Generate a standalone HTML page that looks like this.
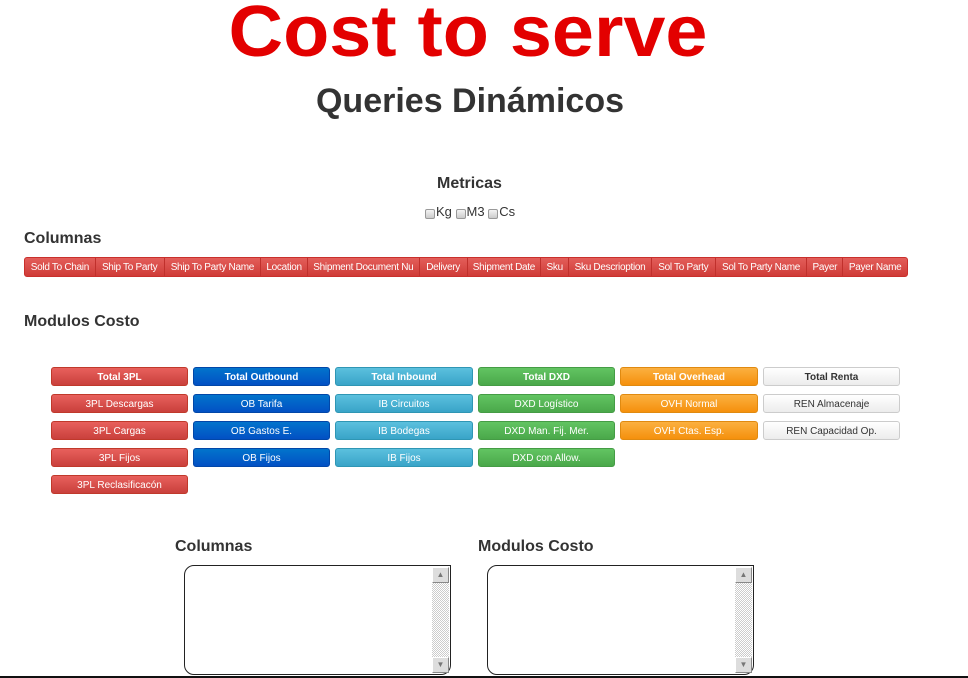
<!DOCTYPE html>
<html><head><meta charset="utf-8"><style>
*{box-sizing:border-box;margin:0;padding:0}
body{width:968px;height:678px;overflow:hidden;background:#fff;font-family:"Liberation Sans",Arial,sans-serif;color:#333;position:relative}
.a{position:absolute}
.t1{left:0;width:936px;text-align:center;top:-4px;font-size:72px;line-height:72px;font-weight:bold;color:#e30000;white-space:nowrap;transform:scaleX(1.05)}
.t2{left:0;width:940px;text-align:center;top:82px;font-size:34px;font-weight:bold;color:#333}
h3{position:absolute;font-size:16px;font-weight:bold;color:#333}
.bar{position:absolute;left:24px;top:257px;width:884px;height:20px;border:1px solid #c9302c;border-radius:3px;background:linear-gradient(#e35e5a,#cf3b37);display:flex;overflow:hidden}
.bar div{height:18px;line-height:19px;color:#fff;font-size:10px;text-align:center;border-left:1px solid #c0302c;white-space:nowrap;letter-spacing:-0.3px}
.bar div:first-child{border-left:none}
.b{position:absolute;width:137px;height:19px;border-radius:3px;font-size:10px;text-align:center;line-height:19px;color:#fff;border:1px solid}
.r{background:linear-gradient(#e8605c,#c9403c);border-color:#c0392b}
.bl{background:linear-gradient(#0274cc,#0250c4);border-color:#0247a8}
.c{background:linear-gradient(#5bc0de,#39a4c8);border-color:#2f96b4}
.g{background:linear-gradient(#62c462,#4aa84a);border-color:#459c45}
.o{background:linear-gradient(#fbb040,#f5900c);border-color:#e08a10}
.w{background:linear-gradient(#fff,#ececec);border-color:#ccc;color:#333}
.bold{font-weight:bold}
.ta{position:absolute;top:565px;width:267px;height:110px;border:1px solid #222;border-radius:10px 0 10px 10px;background:#fff}
.sb{position:absolute;right:1px;top:1px;width:17px;bottom:1px;background:repeating-conic-gradient(#ccc 0 25%,#fff 0 50%) 0 0/2px 2px}
.ar{position:absolute;left:0;width:17px;height:16px;background:#ddd;border:1px solid #aaa;border-color:#fff #888 #888 #fff;font-size:8px;color:#777;text-align:center;line-height:14px}
.cb{display:inline-block;width:10px;height:10px;border:1px solid #999;border-radius:2px;background:linear-gradient(#f4f4f4,#ccc);vertical-align:-3px;margin-right:1px}
</style></head><body>
<div class="a t1">Cost to serve</div>
<div class="a t2">Queries Dinámicos</div>
<h3 style="left:437px;top:175px">Metricas</h3>
<div class="a" style="left:425px;top:204px;font-size:13px;color:#333"><span class="cb"></span>Kg <span class="cb"></span>M3 <span class="cb"></span>Cs</div>
<h3 style="left:24px;top:230px">Columnas</h3>
<div class="bar">
<div style="width:70px">Sold To Chain</div><div style="width:69px">Ship To Party</div><div style="width:97px">Ship To Party Name</div><div style="width:47px">Location</div><div style="width:112px">Shipment Document Nu</div><div style="width:48px">Delivery</div><div style="width:74px">Shipment Date</div><div style="width:28px">Sku</div><div style="width:83px">Sku Descrioption</div><div style="width:64px">Sol To Party</div><div style="width:92px">Sol To Party Name</div><div style="width:36px">Payer</div><div style="width:65px">Payer Name</div>
</div>
<h3 style="left:24px;top:313px">Modulos Costo</h3>

<div class="b r bold" style="left:51px;top:367px">Total 3PL</div>
<div class="b r" style="left:51px;top:394px">3PL Descargas</div>
<div class="b r" style="left:51px;top:421px">3PL Cargas</div>
<div class="b r" style="left:51px;top:448px">3PL Fijos</div>
<div class="b r" style="left:51px;top:475px">3PL Reclasificacón</div>

<div class="b bl bold" style="left:193px;top:367px">Total Outbound</div>
<div class="b bl" style="left:193px;top:394px">OB Tarifa</div>
<div class="b bl" style="left:193px;top:421px">OB Gastos E.</div>
<div class="b bl" style="left:193px;top:448px">OB Fijos</div>

<div class="b c bold" style="left:335px;top:367px;width:138px">Total Inbound</div>
<div class="b c" style="left:335px;top:394px;width:138px">IB Circuitos</div>
<div class="b c" style="left:335px;top:421px;width:138px">IB Bodegas</div>
<div class="b c" style="left:335px;top:448px;width:138px">IB Fijos</div>

<div class="b g bold" style="left:478px;top:367px">Total DXD</div>
<div class="b g" style="left:478px;top:394px">DXD Logístico</div>
<div class="b g" style="left:478px;top:421px">DXD Man. Fij. Mer.</div>
<div class="b g" style="left:478px;top:448px">DXD con Allow.</div>

<div class="b o bold" style="left:620px;top:367px;width:138px">Total Overhead</div>
<div class="b o" style="left:620px;top:394px;width:138px">OVH Normal</div>
<div class="b o" style="left:620px;top:421px;width:138px">OVH Ctas. Esp.</div>

<div class="b w bold" style="left:763px;top:367px">Total Renta</div>
<div class="b w" style="left:763px;top:394px">REN Almacenaje</div>
<div class="b w" style="left:763px;top:421px">REN Capacidad Op.</div>

<h3 style="left:175px;top:538px">Columnas</h3>
<h3 style="left:478px;top:538px">Modulos Costo</h3>
<div class="ta" style="left:184px"><div class="sb"><div class="ar" style="top:0">▲</div><div class="ar" style="bottom:0">▼</div></div></div>
<div class="ta" style="left:487px"><div class="sb"><div class="ar" style="top:0">▲</div><div class="ar" style="bottom:0">▼</div></div></div>
<div class="a" style="left:0;top:676px;width:968px;height:2px;background:#111"></div>
</body></html>
